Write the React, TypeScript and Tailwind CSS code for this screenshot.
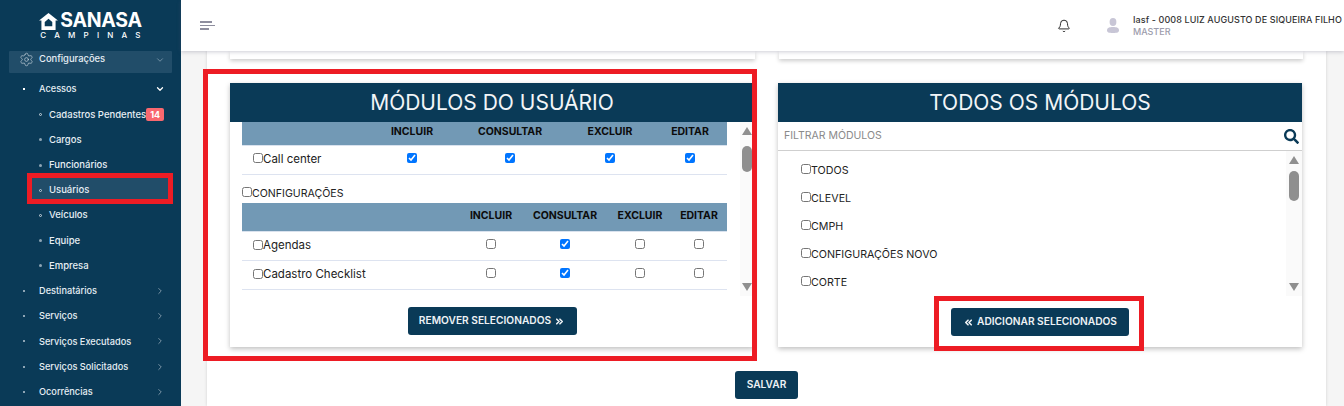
import { Bell, ChevronDown, ChevronRight, ChevronsLeft, ChevronsRight, Settings } from "lucide-react";
import { FaSearch } from "react-icons/fa";

const subItems = [
  { label: "Cadastros Pendentes", badge: "14", ring: true },
  { label: "Cargos" },
  { label: "Funcionários" },
  { label: "Usuários", active: true, ring: true },
  { label: "Veículos", ring: true },
  { label: "Equipe" },
  { label: "Empresa" },
];

const topItems = ["Destinatários", "Serviços", "Serviços Executados", "Serviços Solicitados", "Ocorrências"];

function Logo() {
  return (
    <div className="flex h-[51px] flex-col items-center pt-[11px]">
      <div className="flex h-[20px] items-center gap-[2px]">
        <svg width="19" height="17" viewBox="0 0 20 18" fill="#fff">
          <path d="M10 0 L20 8 L17.5 8 L17.5 18 L2.5 18 L2.5 8 L0 8 Z M10 6 L6 9.5 L6 14 L14 14 L14 9.5 Z" fillRule="evenodd" />
        </svg>
        <span className="text-[19.5px] font-bold leading-none tracking-[-0.3px] text-white">SANASA</span>
      </div>
      <span className="mt-[-1px] pl-[8px] text-[8px] leading-[10px] tracking-[8.2px] text-white">CAMPINAS</span>
    </div>
  );
}

function Sidebar() {
  return (
    <aside className="flex h-[406px] w-[181px] shrink-0 flex-col overflow-hidden bg-[#0a3a57] text-[9.2px] font-medium text-[#e6eef4]">
      <Logo />
      <div className="mx-[9px] flex h-[22px] w-[163px] items-center rounded-[1px] bg-[#214d69] pl-[10px] pb-[5px]">
        <Settings className="h-[15px] w-[15px] text-[#d0dbe3]" strokeWidth={1} />
        <span className="ml-[5px] flex-1 text-[9.4px]">Configurações</span>
        <ChevronDown className="mr-[7px] h-[10px] w-[10px] text-[#7f9bae]" />
      </div>
      <div className="mt-[3px] flex h-[25.2px] shrink-0 items-center pl-[23px]">
        <span className="h-[2px] w-[2px] bg-white" />
        <span className="ml-[14px] flex-1">Acessos</span>
        <ChevronDown className="mr-[16px] h-[10px] w-[10px] text-white" strokeWidth={3} />
      </div>
      {subItems.map((item) => (
        <div
          key={item.label}
          className={`flex h-[25.2px] shrink-0 items-center pt-[2px] text-[9.5px] ${item.active ? "ml-[27px] w-[146px] bg-[#214d69] pl-[12px]" : "pl-[39px]"}`}
        >
          <span
            className={`h-[3px] w-[3px] rounded-full ${item.ring ? "border border-[#c7d3dc] bg-[#0a3a57]" : "bg-[#8ea5b5]"}`}
          />
          <span className="ml-[7px] whitespace-nowrap">{item.label}</span>
          {item.badge && (
            <span className="flex h-[13px] w-[18px] items-center justify-center rounded-[2px] bg-[#f9686f] text-[9px] font-bold text-white">
              {item.badge}
            </span>
          )}
        </div>
      ))}
      {topItems.map((label) => (
        <div key={label} className="flex h-[25.2px] shrink-0 items-center pt-[2px] pl-[23px]">
          <span className="h-[2px] w-[2px] bg-[#8ea5b5]" />
          <span className="ml-[14px] flex-1 whitespace-nowrap">{label}</span>
          <ChevronRight className="mr-[16px] h-[10px] w-[10px] text-[#8ea5b5]" />
        </div>
      ))}
    </aside>
  );
}

function Topbar() {
  return (
    <header className="relative z-10 flex h-[51px] shrink-0 items-center bg-white pl-[19px] shadow-[0_1px_4px_rgba(90,90,120,0.3)]">
      <div className="flex flex-col gap-[2px]">
        <span className="h-[2px] w-[12px] bg-[#8e8e9e]" />
        <span className="h-[1px] w-[15px] bg-[#8e8e9e]" />
        <span className="h-[2px] w-[9px] bg-[#8e8e9e]" />
      </div>
      <Bell className="ml-auto h-[14px] w-[14px] text-[#111]" strokeWidth={1.5} />
      <svg className="ml-[36px]" width="12" height="15" viewBox="0 0 12 15" fill="#c8c6d6">
        <ellipse cx="6" cy="4" rx="3.4" ry="4" />
        <path d="M0 12.5 C0 9.5 2.5 9 6 9 C9.5 9 12 9.5 12 12.5 C12 14.2 10.5 15 6 15 C1.5 15 0 14.2 0 12.5 Z" />
      </svg>
      <div className="ml-[14px] mr-[15px] flex w-[196px] flex-col">
        <span className="whitespace-nowrap text-[9px] font-medium leading-[13px] tracking-[0.1px] text-[#333]">
          Iasf - 0008 LUIZ AUGUSTO DE SIQUEIRA FILHO
        </span>
        <span className="text-[9px] font-medium leading-[12px] text-[#9c9cab]">MASTER</span>
      </div>
    </header>
  );
}

function Scrollbar({
  width,
  thumbTop,
  thumbHeight,
}: {
  width: string;
  thumbTop: string;
  thumbHeight: string;
}) {
  return (
    <div className={`flex ${width} shrink-0 flex-col items-center bg-[#fafafa]`}>
      <span className="mt-[5px] h-0 w-0 border-x-[5px] border-b-[8px] border-x-transparent border-b-[#8f8f8f]" />
      <span className={`${thumbTop} ${thumbHeight} w-[10px] rounded-full bg-[#8f8f8f]`} />
      <span className="mb-[5px] mt-auto h-0 w-0 border-x-[5px] border-t-[8px] border-x-transparent border-t-[#8f8f8f]" />
    </div>
  );
}

function Check({ on }: { on?: boolean }) {
  return <input type="checkbox" readOnly checked={!!on} className="m-0 h-[10px] w-[10px]" />;
}

function PermTable({
  widths,
  headerClass,
  rows,
}: {
  widths: number[];
  headerClass: string;
  rows: { name: string; checks: boolean[] }[];
}) {
  return (
    <table className="w-[485px] table-fixed border-collapse">
      <colgroup>
        {widths.map((w, i) => (
          <col key={i} style={{ width: w }} />
        ))}
      </colgroup>
      <thead>
        <tr className={`${headerClass} border-b border-[#d9e2ee] bg-[#7299b5] text-[10.5px] font-semibold text-[#0c0c0c]`}>
          <th />
          <th className="pb-[2px] text-center">INCLUIR</th>
          <th className="pb-[2px] text-center">CONSULTAR</th>
          <th className="pb-[2px] text-center">EXCLUIR</th>
          <th className="pb-[2px] text-center">EDITAR</th>
        </tr>
      </thead>
      <tbody>
        {rows.map((row) => (
          <tr key={row.name} className="h-[29px] border-b border-[#dde3f0] text-[11.5px] text-[#222]">
            <td className="pl-[11px]">
              <span className="flex items-center">
                <span className="mb-[3px] flex">
                  <Check />
                </span>
                {row.name}
              </span>
            </td>
            {row.checks.map((on, i) => (
              <td key={i} className="pb-[4px] text-center align-middle">
                <span className="flex justify-center">
                  <Check on={on} />
                </span>
              </td>
            ))}
          </tr>
        ))}
      </tbody>
    </table>
  );
}

function PanelHeader({ title }: { title: string }) {
  return (
    <div className="flex h-[39px] items-center justify-center bg-[#0a3a57] text-[21px] leading-none text-[#f2f5f7]">
      {title}
    </div>
  );
}

function ActionButton({ children, className }: { children: React.ReactNode; className: string }) {
  return (
    <button className={`flex h-[28px] items-center justify-center gap-[3px] rounded-[3px] bg-[#0a3a57] text-[10.2px] font-semibold text-[#eef2f5] ${className}`}>
      {children}
    </button>
  );
}

export default function App() {
  return (
    <div className="relative flex h-[406px] w-[1344px] overflow-hidden bg-[#f5f5f5] font-['Inter',sans-serif]">
      <Sidebar />
      <div className="flex min-w-0 flex-1 flex-col">
        <Topbar />
        <main className="ml-[26px] mr-[18px] flex-1 bg-white px-[23px] shadow-[0_0_3px_rgba(0,0,0,0.15)]">
          <div className="flex gap-[24px]">
            <div className="h-[8px] w-[525px] bg-white shadow-[0_2px_4px_rgba(0,0,0,0.2)]" />
            <div className="h-[8px] w-[524px] bg-white shadow-[0_2px_4px_rgba(0,0,0,0.2)]" />
          </div>
          <div className="mt-[24px] flex gap-[24px]">
            <section className="h-[264px] w-[524px] bg-white shadow-[0_2px_5px_rgba(0,0,0,0.25)]">
              <PanelHeader title="MÓDULOS DO USUÁRIO" />
              <div className="flex h-[174px] overflow-hidden pl-[12px]">
                <div className="w-[485px]">
                  <PermTable
                    widths={[129, 82, 114, 86, 74]}
                    headerClass="h-[23px]"
                    rows={[{ name: "Call center", checks: [true, true, true, true] }]}
                  />
                  <div className="flex h-[28px] items-center pt-[10px] text-[10.6px] text-[#222]">
                    <span className="mb-[3px] flex">
                      <Check />
                    </span>
                    CONFIGURAÇÕES
                  </div>
                  <PermTable
                    widths={[219, 60, 88, 62, 56]}
                    headerClass="h-[29px]"
                    rows={[
                      { name: "Agendas", checks: [false, true, false, false] },
                      { name: "Cadastro Checklist", checks: [false, true, false, false] },
                    ]}
                  />
                </div>
                <div className="ml-[13px] flex">
                  <Scrollbar width="w-[14px]" thumbTop="mt-[11px]" thumbHeight="h-[26px]" />
                </div>
              </div>
              <div className="mt-[11px] flex justify-center">
                <ActionButton className="w-[169px]">
                  REMOVER SELECIONADOS
                  <ChevronsRight className="h-[11px] w-[11px]" strokeWidth={3.5} />
                </ActionButton>
              </div>
            </section>

            <section className="h-[264px] w-[524px] bg-white shadow-[0_2px_5px_rgba(0,0,0,0.25)]">
              <PanelHeader title="TODOS OS MÓDULOS" />
              <div className="flex h-[29px] items-center border-b border-[#cfcfcf] pl-[6px] pr-[3px]">
                <input
                  placeholder="FILTRAR MÓDULOS"
                  className="min-w-0 flex-1 bg-transparent text-[10.5px] outline-none placeholder:text-[#8a8a8a]"
                />
                <FaSearch className="h-[15px] w-[15px] text-[#0a3a57]" />
              </div>
              <div className="flex h-[145px] overflow-hidden pl-[23px]">
                <div className="flex-1 pt-[6px]">
                  {["TODOS", "CLEVEL", "CMPH", "CONFIGURAÇÕES NOVO", "CORTE"].map((name) => (
                    <div key={name} className="flex h-[28px] items-center text-[10.7px] text-[#222]">
                      <span className="mb-[5px] flex">
                        <Check />
                      </span>
                      {name}
                    </div>
                  ))}
                </div>
                <div className="flex">
                  <Scrollbar width="w-[16px]" thumbTop="mt-[7px]" thumbHeight="h-[30px]" />
                </div>
              </div>
              <div className="mt-[12px] flex justify-center">
                <ActionButton className="w-[178px]">
                  <ChevronsLeft className="h-[11px] w-[11px]" strokeWidth={3.5} />
                  ADICIONAR SELECIONADOS
                </ActionButton>
              </div>
            </section>
          </div>
          <div className="mt-[24px] flex justify-center">
            <ActionButton className="w-[63px]">SALVAR</ActionButton>
          </div>
        </main>
      </div>

      {/* marcacoes vermelhas por cima da tela */}
      <div className="absolute left-[203px] top-[69px] h-[292px] w-[554px] border-[5px] border-[#ed1c24]" />
      <div className="absolute left-[934px] top-[296px] h-[55px] w-[210px] border-[5px] border-[#ed1c24]" />
      <div className="absolute left-[27px] top-[173px] h-[31px] w-[146px] border-[5px] border-[#ed1c24]" />
    </div>
  );
}
